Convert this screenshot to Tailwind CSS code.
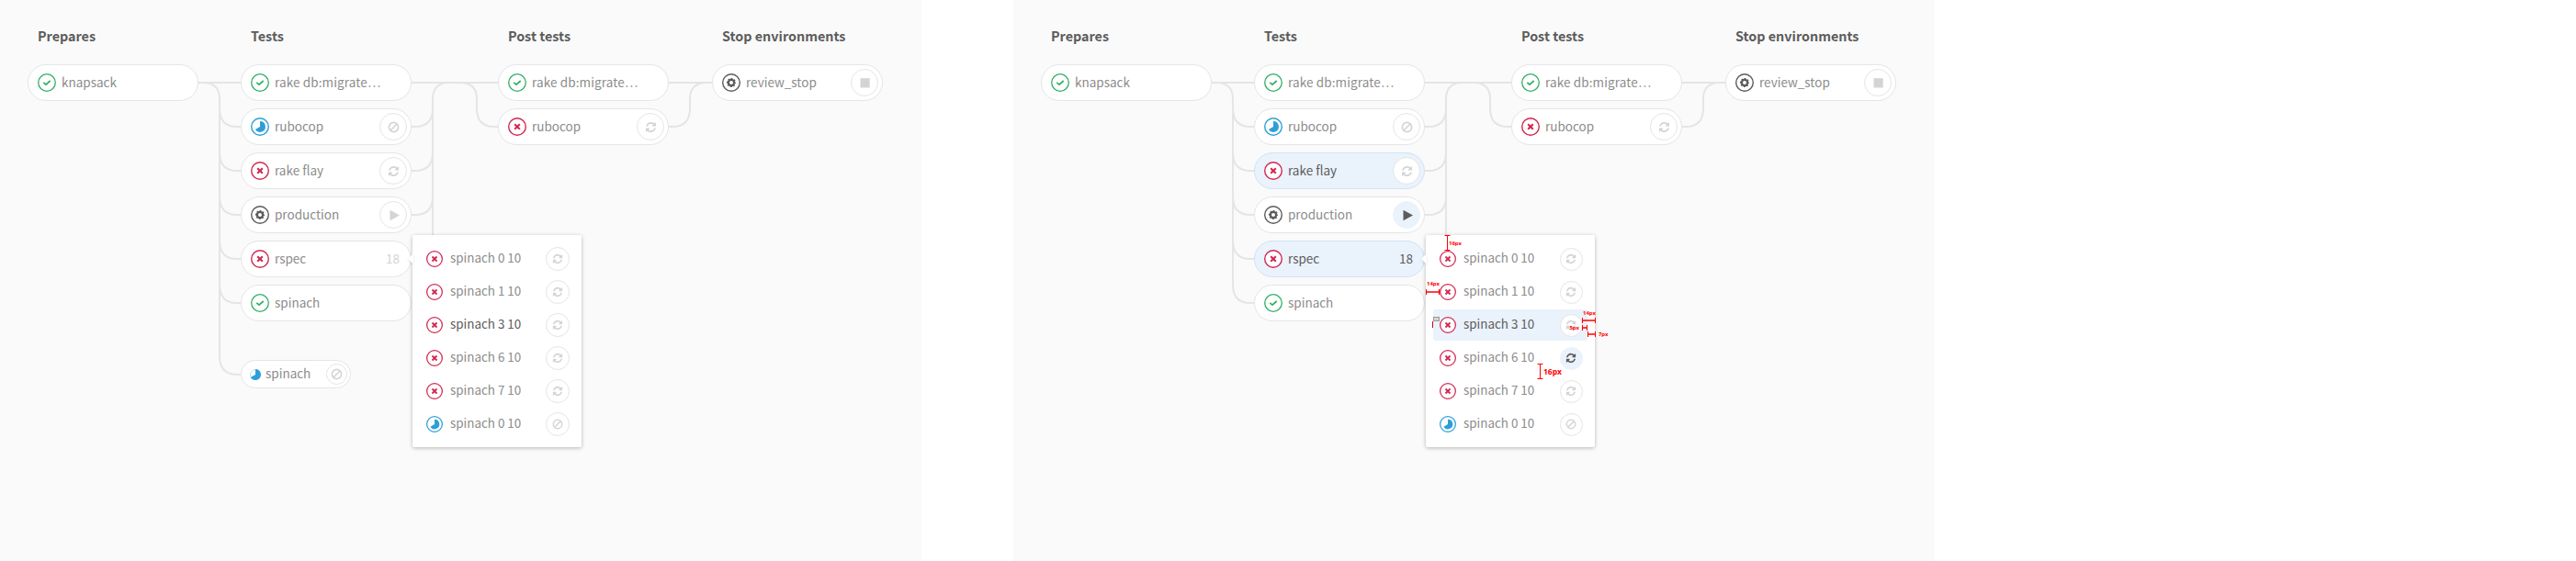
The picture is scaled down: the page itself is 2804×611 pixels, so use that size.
<!DOCTYPE html>
<html lang="en">
<head>
<meta charset="utf-8">
<title>Pipeline graph</title>
<script src="https://cdn.jsdelivr.net/npm/@tailwindcss/browser@4"></script>
</head>
<body class="bg-white font-['Noto_Sans_CJK_SC',sans-serif] overflow-hidden">

<svg class="hidden">
  <symbol id="success" viewBox="-10 -10 20 20"><circle r="9.3" fill="#fff" stroke="#31af64" stroke-width="1.3"/><path d="M-3.7-.1L-1 2.1L3.7-2" fill="none" stroke="#31af64" stroke-width="1.75"/></symbol>
  <symbol id="failed" viewBox="-10 -10 20 20"><circle r="9.3" fill="#fff" stroke="#d22852" stroke-width="1.4"/><path d="M-2.8-2.8L2.8 2.8M2.8-2.8L-2.8 2.8" fill="none" stroke="#d22852" stroke-width="2.1"/></symbol>
  <symbol id="running" viewBox="-10 -10 20 20"><circle r="9.3" fill="#fff" stroke="#2d9fd8" stroke-width="1.4"/><path d="M0 0V-5.9A5.9 5.9 0 1 1-5.1 2.95Z" fill="#2d9fd8"/></symbol>
  <symbol id="manual" viewBox="-10 -10 20 20"><circle r="9.3" fill="#fff" stroke="#5c5c5c" stroke-width="1.4"/><circle r="3.1" fill="none" stroke="#5c5c5c" stroke-width="2.2"/><circle r="4.3" fill="none" stroke="#5c5c5c" stroke-width="1.6" stroke-dasharray="1.9 1.477" stroke-dashoffset=".95"/></symbol>
  <symbol id="pie" viewBox="-6 -6 12 12"><circle r="5.5" fill="#fff" stroke="#2d9fd8" stroke-opacity=".45" stroke-width=".8"/><path d="M0 0V-6A6 6 0 1 1-5.2 3Z" fill="#2d9fd8"/></symbol>
  <symbol id="retry" viewBox="0 0 1792 1792"><path fill="currentColor" d="M1639 1056q0 5-1 7-64 268-268 434.5t-478 166.5q-146 0-282.5-55t-243.5-157l-129 129q-19 19-45 19t-45-19-19-45v-448q0-26 19-45t45-19h448q26 0 45 19t19 45-19 45l-137 137q71 66 161 102t187 36q134 0 250-65t186-179q11-17 53-117 8-23 30-23h192q13 0 22.5 9.5t9.5 22.5zm25-800v448q0 26-19 45t-45 19h-448q-26 0-45-19t-19-45 19-45l138-138q-148-137-349-137-134 0-250 65t-186 179q-11 17-53 117-8 23-30 23h-199q-13 0-22.5-9.5t-9.5-22.5v-7q65-268 270-434.5t480-166.5q146 0 284 55.5t245 156.5l130-129q19-19 45-19t45 19 19 45z"/></symbol>
  <symbol id="cancel" viewBox="-6.5 -6.5 13 13"><circle r="5.1" fill="none" stroke="currentColor" stroke-width="1.6"/><path d="M-3.5 3.5L3.5-3.5" stroke="currentColor" stroke-width="1.6"/></symbol>
  <symbol id="play" viewBox="-6.5 -6.5 13 13"><path d="M-4-5.7L6.5 0L-4 5.7Z" fill="currentColor"/></symbol>
  <symbol id="stop" viewBox="-6.5 -6.5 13 13"><path d="M-5-5.3H5.2V5H-5Z" fill="currentColor"/></symbol>
</svg>

<main id="app" class="flex gap-[100px] h-[611px]"></main>

<script>
const stages = [
  { name: 'Prepares', col: 'w-[186px]', jobs: [['success', 'knapsack']] },
  { name: 'Tests', col: 'w-[186px] ml-[46px]', jobs: [
    ['success', 'rake db:migrate…'], ['running', 'rubocop', 'cancel'], ['failed', 'rake flay', 'retry'],
    ['manual', 'production', 'play'], ['failed', 'rspec', 18], ['success', 'spinach']] },
  { name: 'Post tests', col: 'w-[186px] ml-[94px]', jobs: [['success', 'rake db:migrate…'], ['failed', 'rubocop', 'retry']] },
  { name: 'Stop environments', col: 'w-[186px] ml-[47px]', jobs: [['manual', 'review_stop', 'stop']] },
];
const matrix = [['failed', '0'], ['failed', '1'], ['failed', '3'], ['failed', '6'], ['failed', '7'], ['running', '0']];

const action = (name, active, size, glyph) =>
  `<span class="${size} shrink-0 rounded-full border flex items-center justify-center ${active ? 'bg-[#eaf2fb] border-[#eaf2fb] text-[#5c5c5c]' : 'bg-white border-[#e5e5e5] text-[#d4d4d4]'}"><svg class="${glyph}"><use href="#${name}"/></svg></span>`;

const job = ([icon, label, extra], hover) => {
  const on = hover && (label === 'rake flay' || label === 'rspec');
  const tail = typeof extra === 'number'
    ? `<span class="mr-2 pb-0.5 ${on ? 'text-[#5c5c5c]' : 'text-[#d4d4d4]'}">${extra}</span>`
    : extra ? action(extra, hover && extra === 'play', 'size-[30px]', 'size-[13px]') : '';
  return `<div class="h-10 rounded-full border flex items-center pl-[10px] pr-1 text-[13.5px] leading-5 ${on ? 'bg-[#eaf2fb] border-[#cfe4f7] text-[#5c5c5c]' : 'bg-white border-[#e5e5e5] text-[#8c8c8c]'}">
    <svg class="size-5 shrink-0"><use href="#${icon}"/></svg><span class="ml-[6px] pb-0.5 grow whitespace-nowrap ${label.endsWith('…') ? 'tracking-[0.12px]' : ''}">${label}</span>${tail}</div>`;
};

const connectors = hover => `<svg class="absolute inset-0 w-[1003px] h-[611px]" fill="none" stroke="#e5e5e5" stroke-width="2">
  <path d="M216 90H262M448 90H542M728 90H775"/>
  <path d="M221 90Q239 90 239 108V${hover ? 310 : '388Q239 408 259 408H262'}"/>
  ${[138, 186, 234, 282, 330].map(y => `<path d="M239 ${y - 20}Q239 ${y} 258 ${y}H262"/>`).join('')}
  ${[138, 186, 234].map(y => `<path d="M448 ${y}H452Q471 ${y} 471 ${y - 20}"/>`).join('')}
  <path d="M471 260V108Q471 90 489 90M501 90Q519 90 519 108V118Q519 138 538 138H542M728 138H732Q751 138 751 118V108Q751 90 769 90"/>
</svg>`;

const popup = hover => `<div class="absolute left-[449px] top-[256px] w-[184px] h-[231px] rounded-[2px] bg-white shadow-[0_1px_4px_rgba(0,0,0,0.28)] pt-[9px] px-2 flex flex-col gap-[2px]">
  <svg class="absolute left-[-5px] top-[20px] w-[6px] h-[12px] drop-shadow-[0_1px_1px_rgba(0,0,0,0.12)]"><path d="M6 0L0 6L6 12Z" fill="#fff"/></svg>
  ${matrix.map(([icon, n], i) => `<div class="h-[34px] rounded-[3px] flex items-center pl-[7px] pr-[5px] text-[13.4px] leading-5 ${n === '3' ? 'text-[#5c5c5c]' : 'text-[#8c8c8c]'} ${hover && i === 2 ? 'bg-[#eaf2fb]' : ''}">
    <svg class="size-[18px] shrink-0"><use href="#${icon}"/></svg><span class="ml-2 pb-1 grow whitespace-nowrap">spinach ${n} 10</span>${action(icon === 'running' ? 'cancel' : 'retry', hover && i === 3, hover ? 'size-[25px] mr-[0.5px]' : 'size-[26px]', 'size-3')}</div>`).join('')}
</div>`;

const smallJob = `<div class="absolute left-[262px] top-[392px] w-[120px] h-[31px] rounded-full border border-[#e5e5e5] bg-white flex items-center pl-[9px] pr-[3px] text-[13.5px] leading-5 text-[#8c8c8c]">
  <svg class="size-3 shrink-0"><use href="#pie"/></svg><span class="ml-[5px] pb-[3px] grow">spinach</span>${action('cancel', false, 'size-[23px]', 'size-[13px]')}</div>`;

const measures = `<svg class="absolute inset-0 w-[1003px] h-[611px] font-['Open_Sans',sans-serif] font-bold text-[6px]" fill="none" stroke="#f00">
  <path d="M472.5 256.5V272.5M469.5 256.5H475.5M469.5 272.5H475.5"/>
  <path d="M573.5 396.5V412.5M570.5 396.5H576.5M570.5 412.5H576.5"/>
  <path d="M449.5 318H464M619.5 349H633.5M619.5 357H624.5M625.5 364H633.5" stroke-width="1.6"/>
  <path d="M449.5 315V321M463.5 315V321M619.5 346V352M633.5 346V352M619.5 354V360M624.5 354V360M625.5 361V367M633.5 361V367"/>
  <path d="M456.5 350V357" stroke="#c8001c"/>
  <rect x="457.5" y="345.5" width="6" height="4" fill="#d4d4d4" stroke="#999"/>
  <g fill="#f00" stroke="none">
    <text x="474" y="266.6" textLength="14">16px</text><text x="450" y="311.4" textLength="14">14px</text><text x="620" y="342.6" textLength="14">14px</text>
    <text x="605.5" y="358.7" textLength="10.5">5px</text><text x="637" y="365.7" textLength="10.5">7px</text><text x="577" y="408" class="text-[8.5px]" textLength="20">16px</text>
  </g>
</svg>`;

const panel = hover => `<section class="relative w-[1003px] h-[611px] shrink-0 bg-[#fafafa]">
  ${connectors(hover)}
  <div class="relative flex pl-[30px] pt-[29px]">
    ${stages.map(s => `<div class="${s.col} flex flex-col"><h3 class="h-[41px] pl-[11px] text-[14.35px] leading-5 font-bold text-[#5c5c5c] whitespace-nowrap">${s.name}</h3>
    <div class="flex flex-col gap-2">${s.jobs.map(j => job(j, hover)).join('')}</div></div>`).join('')}
  </div>
  ${hover ? '' : smallJob}
  ${popup(hover)}
  ${hover ? measures : ''}
</section>`;

document.getElementById('app').innerHTML = panel(false) + panel(true);
</script>
</body>
</html>
